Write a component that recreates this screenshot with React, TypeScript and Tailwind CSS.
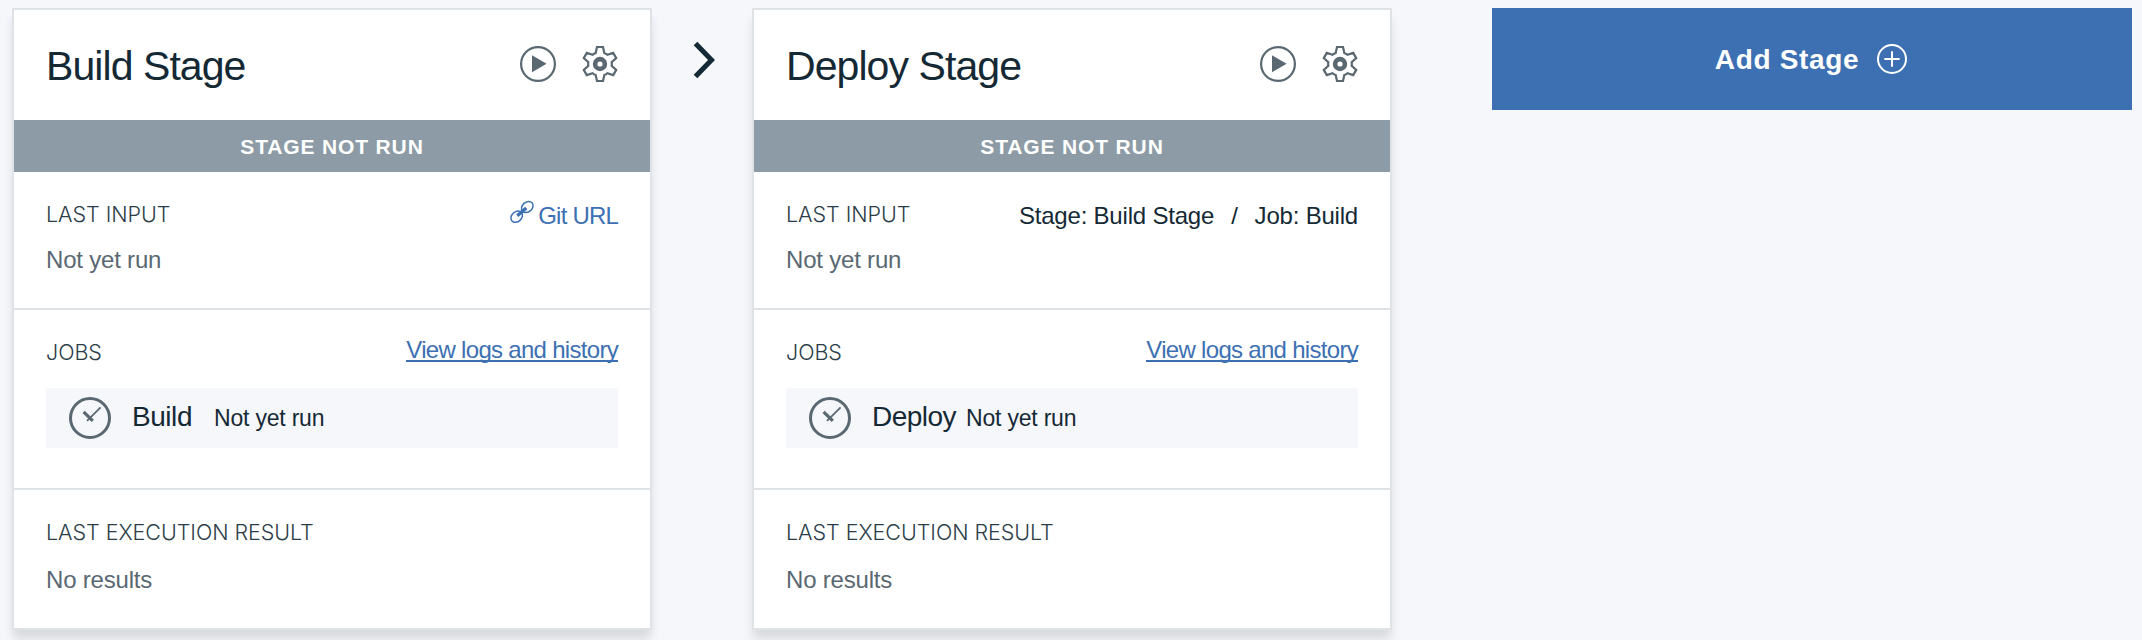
import type { ReactNode } from "react";

function PlayIcon() {
  return (
    <svg className="size-9" viewBox="0 0 36 36" fill="none">
      <circle cx="18" cy="18" r="16.9" stroke="#5a6872" strokeWidth="2.2" />
      <path d="M12 9.3 26.6 17.8 12 26.2Z" fill="#5a6872" />
    </svg>
  );
}

function GearIcon() {
  return (
    <svg className="size-9" viewBox="-18 -18 36 36" fill="none" stroke="#5a6872">
      <path
        strokeWidth="2.2"
        d="M-4.3-11-3-17H3L4.3-11Q6-10.4 7.38-9.22L13.22-11.1 16.22-5.9 11.68-1.78Q12 0 11.68 1.78L16.22 5.9 13.22 11.1 7.38 9.22Q6 10.4 4.3 11L3 17H-3L-4.3 11Q-6 10.4-7.38 9.22L-13.22 11.1-16.22 5.9-11.68 1.78Q-12 0-11.68-1.78L-16.22-5.9-13.22-11.1-7.38-9.22Q-6-10.4-4.3-11Z"
      />
      <circle r="4.9" strokeWidth="4.6" />
    </svg>
  );
}

function LinkIcon() {
  return (
    <svg className="h-6 w-[26px]" viewBox="0 0 26 24" fill="none" stroke="#3d70b2">
      <ellipse cx="18.3" cy="7" rx="6.4" ry="4.9" transform="rotate(-42 18.3 7)" strokeWidth="1.5" />
      <ellipse cx="7.7" cy="16.7" rx="6.4" ry="4.9" transform="rotate(-42 7.7 16.7)" strokeWidth="1.5" />
      <path d="M8.3 15.8 17.3 8" strokeWidth="3.4" />
    </svg>
  );
}

function ClockIcon() {
  return (
    <svg className="size-[42px]" viewBox="0 0 42 42" fill="none" stroke="#5a6872">
      <circle cx="21" cy="21" r="19.5" strokeWidth="3" />
      <path d="M14.6 14.8 23.8 23.8" strokeWidth="3.2" />
      <path d="M18 23.9 31.6 10.4" strokeWidth="1.8" />
    </svg>
  );
}

function Label({ children }: { children: ReactNode }) {
  return (
    <div className="font-['Inter','Liberation_Sans',sans-serif] text-[21.5px] leading-7 font-light tracking-[-0.05px] text-[#2b3d48]">
      {children}
    </div>
  );
}

interface StageProps {
  name: string;
  input: ReactNode;
  job: string;
  jobNameClass: string;
}

function StageCard({ name, input, job, jobNameClass }: StageProps) {
  return (
    <section className="h-[622px] w-[640px] shrink-0 border-2 border-[#dfe3e6] bg-white shadow-[0_10px_10px_-1px_rgba(0,0,0,0.12)]">
      <header className="flex h-[110px] items-start justify-between pt-8 pr-8 pl-8">
        <h2 className="text-[41px] leading-[48px] tracking-[-0.93px]">{name}</h2>
        <div className="flex gap-[26px] pt-1">
          <PlayIcon />
          <GearIcon />
        </div>
      </header>
      <div className="flex h-[52px] items-center justify-center bg-[#8c9ba5] pt-[2px] text-[21px] font-bold tracking-[0.85px] text-white">
        STAGE NOT RUN
      </div>
      <div className="h-[138px] border-b-2 border-[#dfe3e6] px-8 pt-7">
        <div className="flex h-8 items-start justify-between">
          <Label>LAST INPUT</Label>
          {input}
        </div>
        <p className="mt-[14px] text-[24px] leading-7 tracking-[-0.2px] text-[#5a6872]">Not yet run</p>
      </div>
      <div className="h-[180px] border-b-2 border-[#dfe3e6] px-8 pt-7">
        <div className="flex h-[50px] items-start justify-between">
          <Label>JOBS</Label>
          <a className="mt-[2px] border-b-2 border-[#3d70b2] text-[24px] leading-[20px] tracking-[-0.7px] text-[#3d70b2]">
            View logs and history
          </a>
        </div>
        <div className="flex h-[60px] items-center bg-[#f5f7fb] pl-[23px]">
          <ClockIcon />
          <span className={jobNameClass}>{job}</span>
          <span className="text-[23px] leading-7 tracking-[-0.2px]">Not yet run</span>
        </div>
      </div>
      <div className="px-8 pt-7">
        <Label>LAST EXECUTION RESULT</Label>
        <p className="mt-5 text-[24px] leading-7 tracking-[-0.2px] text-[#5a6872]">No results</p>
      </div>
    </section>
  );
}

export default function App() {
  return (
    <main className="flex h-[640px] w-[2142px] items-start overflow-hidden bg-[#f5f7fb] pt-2 pl-3 font-['Liberation_Sans',Arial,sans-serif] text-[#152935]">
      <StageCard
        name="Build Stage"
        job="Build"
        jobNameClass="ml-[21px] w-[82px] pb-[3px] text-[28px] leading-8 tracking-[-0.45px]"
        input={
          <div className="flex items-start text-[24px] leading-8 tracking-[-0.8px] text-[#3d70b2]">
            <LinkIcon />
            <span className="ml-[3px]">Git URL</span>
          </div>
        }
      />
      <div className="flex w-[100px] shrink-0 justify-center pt-[33px] pl-[3px]">
        <svg className="h-[38px] w-6" viewBox="0 0 24 38" fill="none">
          <path d="M3.5 2.5 19.5 19 3.5 35.5" stroke="#152935" strokeWidth="5" />
        </svg>
      </div>
      <StageCard
        name="Deploy Stage"
        job="Deploy"
        jobNameClass="ml-[21px] w-[94px] pb-[3px] text-[28px] leading-8 tracking-[-0.55px]"
        input={
          <div className="flex items-start text-[24px] leading-8 tracking-[-0.2px]">
            <span>Stage: Build Stage</span>
            <span className="mx-[17px]">/</span>
            <span>Job: Build</span>
          </div>
        }
      />
      <button className="ml-[100px] flex h-[102px] w-[640px] shrink-0 items-center justify-center bg-[#3d70b2] pr-[2px] text-[28px] font-bold tracking-[0.65px] text-white">
        <span className="pt-[2px]">Add Stage</span>
        <svg className="ml-[18px] size-[30px]" viewBox="0 0 30 30" fill="none" stroke="#fff" strokeWidth="2">
          <circle cx="15" cy="15" r="14" />
          <path d="M15 7.3V22.7M7.3 15H22.7" />
        </svg>
      </button>
    </main>
  );
}
